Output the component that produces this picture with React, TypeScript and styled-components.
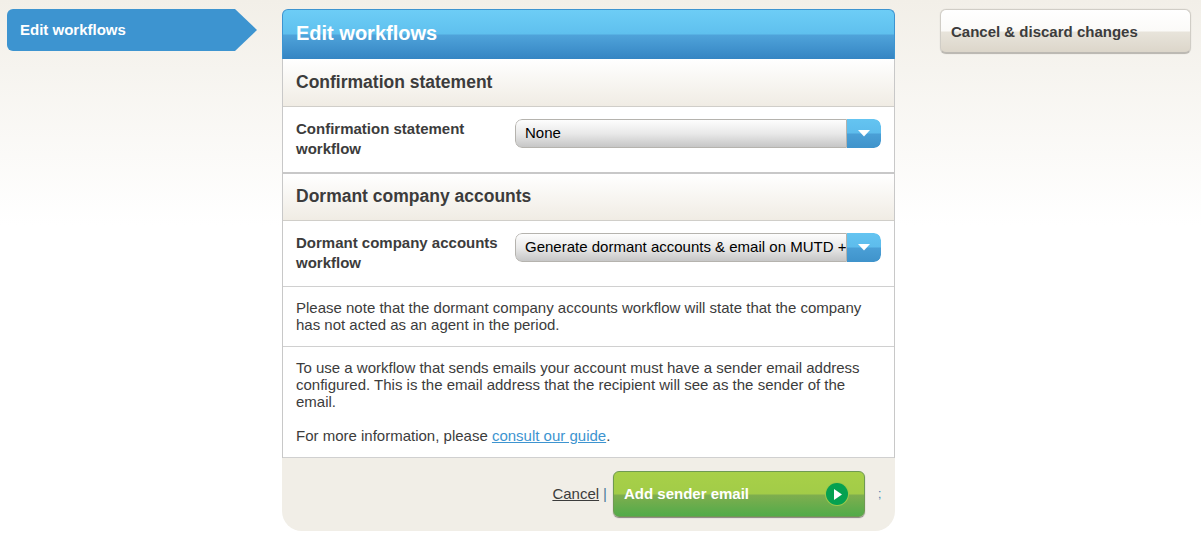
import styled, { createGlobalStyle } from 'styled-components';

const GlobalStyle = createGlobalStyle`
	html, body {
		margin: 0;
		padding: 0;
		background: #fff;
	}
	body {
		font-family: "Liberation Sans", Arial, sans-serif;
		font-size: 15px;
		color: #3c3c3c;
	}
`;

const Page = styled.div`
	display: grid;
	grid-template-columns: 250px 613px 251px;
	column-gap: 25px;
	align-items: start;
	height: 556px;
	box-sizing: border-box;
	padding: 9px 0 0 7px;
	background: linear-gradient(#f2efe8 0, #fff 225px);
	overflow: hidden;
`;

const SideItem = styled.a`
	position: relative;
	display: block;
	width: 228px;
	height: 42px;
	box-sizing: border-box;
	padding: 13px 0 0 13px;
	border-radius: 6px 0 0 6px;
	background: #3d94d0;
	color: #fff;
	font-size: 15px;
	font-weight: bold;
	line-height: 16px;

	&::after {
		content: '';
		position: absolute;
		left: 100%;
		top: 0;
		border-left: 22px solid #3d94d0;
		border-top: 21px solid transparent;
		border-bottom: 21px solid transparent;
	}
`;

const Panel = styled.main`
	display: flex;
	flex-direction: column;
`;

const PanelTitle = styled.h1`
	margin: 0;
	height: 50px;
	box-sizing: border-box;
	padding: 11px 13px 0;
	border: 1px solid #3d94d0;
	border-bottom: 0;
	border-radius: 6px 6px 0 0;
	background: linear-gradient(#6dcdf6 0, #5fc0ee 24px, #4fa3da 25px, #3585c3 100%);
	color: #fff;
	font-size: 20px;
	line-height: 24px;
	font-weight: bold;
`;

const Body = styled.div`
	border-left: 1px solid #c8c8c8;
	border-right: 1px solid #c8c8c8;
	background: #fff;
`;

const SectionHead = styled.h2<{ $height: number }>`
	display: flex;
	align-items: center;
	margin: 0;
	height: ${p => p.$height}px;
	box-sizing: border-box;
	padding: 0 13px 2px;
	border-bottom: 1px solid #d0cec9;
	background: linear-gradient(#fff, #f0ece4);
	color: #3c3c3c;
	font-size: 17.5px;
	line-height: 20px;
	font-weight: bold;
`;

const Row = styled.div<{ $divider?: boolean }>`
	display: grid;
	grid-template-columns: 219px 366px;
	height: ${p => (p.$divider ? '67px' : '66px')};
	box-sizing: border-box;
	padding: 12px 13px 0;
	border-bottom: ${p => (p.$divider ? '2px solid #c8c8c8' : '1px solid #d0d0d0')};
`;

const RowLabel = styled.label`
	font-size: 15px;
	font-weight: bold;
	line-height: 20px;
	color: #3c3c3c;
`;

const Select = styled.div`
	display: flex;
	height: 29px;
	box-sizing: border-box;
	border-radius: 7px;
	overflow: hidden;
`;

const SelectValue = styled.div`
	flex: 1;
	min-width: 0;
	box-sizing: border-box;
	padding: 4px 0 0 9px;
	border: 1px solid #b5b3ae;
	border-radius: 7px 0 0 7px;
	background: linear-gradient(#fdfdfd 0, #e9e9e9 50%, #c6c6c6 100%);
	color: #000;
	font-size: 15px;
	line-height: 17px;
	white-space: nowrap;
	overflow: hidden;
`;

const SelectArrow = styled.div`
	flex: 0 0 34px;
	display: flex;
	align-items: center;
	justify-content: center;
	background: linear-gradient(#64c4f1 0, #5dbcec 14px, #4a9fd6 15px, #3f93cb 100%);
	border-radius: 0 7px 7px 0;

	svg {
		display: block;
	}
`;

const Note = styled.div<{ $height: number }>`
	height: ${p => p.$height}px;
	box-sizing: border-box;
	padding: 12px 13px 0;
	border-bottom: 1px solid #d0d0d0;
	font-size: 15px;
	line-height: 17px;
	color: #3c3c3c;

	p {
		margin: 0 0 17px;
	}

	a {
		color: #3d94d0;
	}
`;

const Footer = styled.div`
	display: flex;
	align-items: flex-start;
	height: 73px;
	box-sizing: border-box;
	padding: 13px 30px 0 0;
	justify-content: flex-end;
	background: #f1eee7;
	border-radius: 0 0 20px 20px;
`;

const CancelLink = styled.a`
	margin-top: 14px;
	color: #3c3c3c;
	text-decoration: underline;
	font-size: 15px;
	line-height: 17px;
`;

const Pipe = styled.span`
	margin: 14px 6px 0 4px;
	color: #4f7a9a;
	font-size: 15px;
	line-height: 17px;
`;

const GreenButton = styled.button`
	position: relative;
	display: flex;
	align-items: center;
	justify-content: space-between;
	width: 252px;
	height: 46px;
	box-sizing: border-box;
	padding: 0 16px 2px 10px;
	border: 1px solid #6f9a52;
	border-radius: 6px;
	background: linear-gradient(#a8d048 0, #a2cc48 22px, #7fae4e 23px, #52ab4a 100%);
	box-shadow: 0 1px 1px rgba(0, 0, 0, 0.45);
	color: #fff;
	font-family: inherit;
	font-size: 15px;
	font-weight: bold;
`;

const Semi = styled.span`
	position: absolute;
	left: calc(100% + 14px);
	top: 15px;
	color: #3d7fb0;
	font-size: 12px;
	font-weight: normal;
`;

const GoIcon = styled.span`
	display: flex;
	align-items: center;
	justify-content: center;
	width: 22px;
	height: 22px;
	margin-top: 2px;
	border-radius: 50%;
	background: #05a150;
	box-shadow: 0 0 0 1px #9cc94a;

	svg {
		display: block;
		margin-left: 2px;
	}
`;

const DiscardButton = styled.button`
	height: 45px;
	width: 251px;
	box-sizing: border-box;
	padding: 0 0 0 10px;
	text-align: left;
	border: 1px solid #d0cdc6;
	border-bottom: 2px solid #bcb9b3;
	border-radius: 6px;
	background: linear-gradient(#fff 0, #fbfaf8 21px, #e8e4db 22px, #dcd6ca 100%);
	box-shadow: 0 0 1px rgba(0, 0, 0, 0.2);
	color: #3c3c3c;
	font-family: inherit;
	font-size: 15px;
	font-weight: bold;
	margin-left: 20px;
`;

const Caret = () => (
	<svg width="12" height="7" viewBox="0 0 12 7">
		<path d="M0 0h12L6 6.5z" fill="#fff" />
	</svg>
);

export default function App() {
	return (
		<Page>
			<GlobalStyle />
			<nav>
				<SideItem>Edit workflows</SideItem>
			</nav>
			<Panel>
				<PanelTitle>Edit workflows</PanelTitle>
				<Body>
					<SectionHead $height={48}>Confirmation statement</SectionHead>
					<Row $divider>
						<RowLabel>Confirmation statement workflow</RowLabel>
						<Select>
							<SelectValue>None</SelectValue>
							<SelectArrow>
								<Caret />
							</SelectArrow>
						</Select>
					</Row>
					<SectionHead $height={47}>Dormant company accounts</SectionHead>
					<Row>
						<RowLabel>Dormant company accounts workflow</RowLabel>
						<Select>
							<SelectValue>Generate dormant accounts &amp; email on MUTD +</SelectValue>
							<SelectArrow>
								<Caret />
							</SelectArrow>
						</Select>
					</Row>
					<Note $height={60}>
						Please note that the dormant company accounts workflow will state that the company has not
						acted as an agent in the period.
					</Note>
					<Note $height={111}>
						<p>
							To use a workflow that sends emails your account must have a sender email address
							configured. This is the email address that the recipient will see as the sender of the
							email.
						</p>
						For more information, please <a href="#guide">consult our guide</a>.
					</Note>
				</Body>
				<Footer>
					<CancelLink>Cancel</CancelLink>
					<Pipe>|</Pipe>
					<GreenButton>
						Add sender email
						<GoIcon>
							<svg width="8" height="11" viewBox="0 0 8 11">
								<path d="M0 0l8 5.5-8 5.5z" fill="#fff" />
							</svg>
						</GoIcon>
						<Semi>;</Semi>
					</GreenButton>
				</Footer>
			</Panel>
			<aside>
				<DiscardButton>Cancel &amp; discard changes</DiscardButton>
			</aside>
		</Page>
	);
}
